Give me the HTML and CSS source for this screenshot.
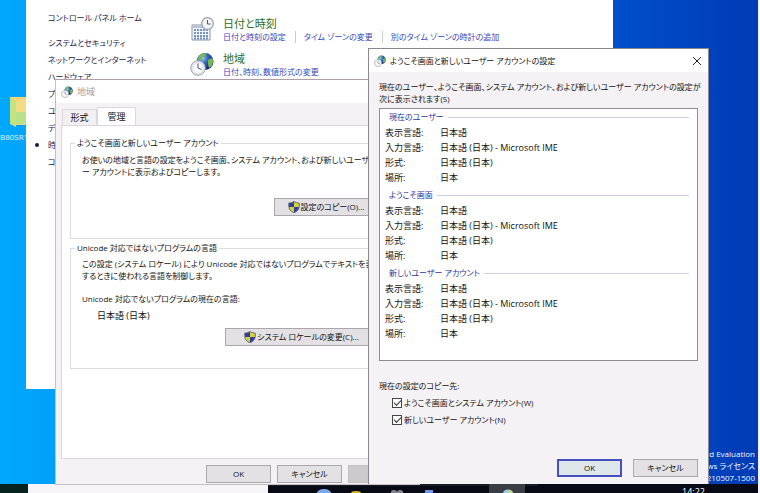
FILE: index.html
```
<!DOCTYPE html>
<html lang="ja">
<head>
  <meta charset="UTF-8">
  <meta name="viewport" content="width=device-width, initial-scale=1.0">
  <title>ようこそ画面と新しいユーザー アカウントの設定</title>
  <link rel="stylesheet" href="styles.css">
</head>
<body>
  <svg class="sprite" aria-hidden="true">
    <defs>
      <radialGradient id="globe" cx="35%" cy="30%" r="75%">
        <stop offset="0" stop-color="#9cc8f4"/>
        <stop offset=".45" stop-color="#2f62b8"/>
        <stop offset="1" stop-color="#12205e"/>
      </radialGradient>
    </defs>
    <symbol id="region" viewBox="0 0 24 24">
      <circle cx="15" cy="9.500" r="8.500" fill="url(#globe)"/>
      <path d="M9 4c2-2.500 5-3 7-2.500l-1 3-3 1-1 3-3-1zM18 8l4-2 1.300 3-1.300 5-3 2-1-4z" fill="#76b84e"/>
      <circle cx="8" cy="16" r="7.300" fill="#e9edf2" stroke="#98a3ae"/>
      <circle cx="8" cy="16" r="5.300" fill="#fafcff" stroke="#cbd2da" stroke-width=".6"/>
      <path d="M8 11.500V16l3.500 1.500" fill="none" stroke="#4b5563"/>
    </symbol>
    <symbol id="date" viewBox="0 0 24 24">
      <path d="M2 8h18v15H2z" fill="#f2f6fb" stroke="#8796aa"/>
      <path d="M2.500 8.500h17v2.500h-17z" fill="#b7c5d6"/>
      <path d="M4 13h14M4 16h14M4 19h14M4 21.500h14" stroke="#7793c0" stroke-width="1.800" stroke-dasharray="2 1"/>
      <circle cx="17.500" cy="6.500" r="5.800" fill="#f3f5f7" stroke="#98a3ae" stroke-width="1.300"/>
      <path d="M17.500 3v4h3" fill="none" stroke="#4b5563"/>
    </symbol>
    <symbol id="shield" viewBox="0 0 12 12">
      <path d="M6 .5C4.500 1.500 2.500 2 .8 2v3.500C.8 8.500 3 10.500 6 11.700 9 10.500 11.200 8.500 11.200 5.500V2C9.500 2 7.500 1.500 6 .5z" fill="#2f3f9c"/>
      <path d="M6 .5C7.500 1.500 9.500 2 11.200 2v4H6zM6 6v5.700C3 10.500 1 8.500.8 6z" fill="#d9d13a"/>
      <path d="M6 .5C4.500 1.500 2.500 2 .8 2v3.500C.8 8.500 3 10.500 6 11.700 9 10.500 11.200 8.500 11.200 5.500V2C9.500 2 7.500 1.500 6 .5z" fill="none" stroke="#55606e" stroke-width=".8"/>
    </symbol>
  </svg>

  <div class="desktop">
    <div class="folder">
      <svg viewBox="0 0 24 32"><path d="M1 1h20v28l-15 0z" fill="#f6d27a"/><path d="M1 1l6 4v26l-6-3z" fill="#c6e27c"/><path d="M7 5l14-3v25H7z" fill="#f3dc86"/><path d="M7 16h14v12H7z" fill="#b9e08b"/></svg>
      <span>B80SR1</span>
    </div>
    <div class="watermark">
      <p>Windows Server 2022 Standard Evaluation</p>
      <p>Windows ライセンス</p>
      <p>Build 20348.fe_release.210507-1500</p>
    </div>

    <div class="window control-panel">
      <nav class="side">
        <a class="home" href="#">コントロール パネル ホーム</a>
        <a href="#">システムとセキュリティ</a>
        <a href="#">ネットワークとインターネット</a>
        <a href="#">ハードウェア</a>
        <a href="#">プログラム</a>
        <a href="#">ユーザー アカウント</a>
        <a href="#">デスクトップのカスタマイズ</a>
        <a class="current" href="#">時計と地域</a>
        <a href="#">コンピューターの簡単操作</a>
      </nav>
      <div class="categories">
        <section class="category">
          <svg><use href="#date"/></svg>
          <div>
            <h2>日付と時刻</h2>
            <div class="tasks"><a href="#">日付と時刻の設定</a><a href="#">タイム ゾーンの変更</a><a href="#">別のタイム ゾーンの時計の追加</a></div>
          </div>
        </section>
        <section class="category">
          <svg><use href="#region"/></svg>
          <div>
            <h2>地域</h2>
            <div class="tasks"><a href="#">日付、時刻、数値形式の変更</a></div>
          </div>
        </section>
      </div>
    </div>

    <div class="window region">
      <header class="titlebar inactive"><svg><use href="#region"/></svg><span>地域</span></header>
      <div class="tabs">
        <button class="tab">形式</button>
        <button class="tab active">管理</button>
      </div>
      <div class="panel">
        <fieldset class="group">
          <legend>ようこそ画面と新しいユーザー アカウント</legend>
          <p>お使いの地域と言語の設定をようこそ画面、システム アカウント、および新しいユーザ<br>ー アカウントに表示およびコピーします。</p>
          <button class="btn copy"><svg><use href="#shield"/></svg>設定のコピー(O)...</button>
        </fieldset>
        <fieldset class="group">
          <legend>Unicode 対応ではないプログラムの言語</legend>
          <p>この設定 (システム ロケール) により Unicode 対応ではないプログラムでテキストを表示<br>するときに使われる言語を制御します。</p>
          <p class="label">Unicode 対応でないプログラムの現在の言語:</p>
          <p class="value">日本語 (日本)</p>
          <button class="btn locale"><svg><use href="#shield"/></svg>システム ロケールの変更(C)...</button>
        </fieldset>
      </div>
      <footer class="actions">
        <button class="btn">OK</button>
        <button class="btn">キャンセル</button>
        <button class="btn" disabled>適用(A)</button>
      </footer>
    </div>

    <div class="window accounts">
      <header class="titlebar">
        <svg><use href="#region"/></svg>
        <span>ようこそ画面と新しいユーザー アカウントの設定</span>
        <button class="close" aria-label="閉じる"><svg viewBox="0 0 10 10"><path d="M1 1l8 8M9 1L1 9" stroke="#222" fill="none"/></svg></button>
      </header>
      <div class="content">
        <p>現在のユーザー、ようこそ画面、システム アカウント、および新しいユーザー アカウントの設定が<br>次に表示されます(S)</p>
        <div class="list">
          <section>
            <h3>現在のユーザー</h3>
            <dl>
              <dt>表示言語:</dt><dd>日本語</dd>
              <dt>入力言語:</dt><dd>日本語 (日本) - Microsoft IME</dd>
              <dt>形式:</dt><dd>日本語 (日本)</dd>
              <dt>場所:</dt><dd>日本</dd>
            </dl>
          </section>
          <section>
            <h3>ようこそ画面</h3>
            <dl>
              <dt>表示言語:</dt><dd>日本語</dd>
              <dt>入力言語:</dt><dd>日本語 (日本) - Microsoft IME</dd>
              <dt>形式:</dt><dd>日本語 (日本)</dd>
              <dt>場所:</dt><dd>日本</dd>
            </dl>
          </section>
          <section>
            <h3>新しいユーザー アカウント</h3>
            <dl>
              <dt>表示言語:</dt><dd>日本語</dd>
              <dt>入力言語:</dt><dd>日本語 (日本) - Microsoft IME</dd>
              <dt>形式:</dt><dd>日本語 (日本)</dd>
              <dt>場所:</dt><dd>日本</dd>
            </dl>
          </section>
        </div>
        <p class="copy-to">現在の設定のコピー先:</p>
        <label class="check"><input type="checkbox" checked>ようこそ画面とシステム アカウント(W)</label>
        <label class="check"><input type="checkbox" checked>新しいユーザー アカウント(N)</label>
      </div>
      <footer class="actions">
        <button class="btn default">OK</button>
        <button class="btn">キャンセル</button>
      </footer>
    </div>
  </div>

  <div class="taskbar">
    <div class="start"></div>
    <div class="gap"></div>
    <div class="apps">
      <svg viewBox="0 0 270 9">
        <path d="M0 0h270v2H0z" fill="#191d22"/>
        <path d="M221 0h36v9h-36z" fill="#3a3d44"/>
        <path d="M49 9a7 4 0 0 1 14 0z" fill="#79a9e8"/>
        <path d="M83 9a5 2 0 0 1 10 0z" fill="#d8b52c"/>
        <path d="M123 9a3 2.500 0 0 1 6-1 3 2.500 0 0 1 6 1z" fill="#85858b"/>
        <path d="M157 6h8v3h-8z" fill="#6f95f0"/>
        <path d="M235 9a5 3.500 0 0 1 10 0z" fill="#9dc7ee"/>
        <path d="M240 6a5 3.500 0 0 1 5 3h-5z" fill="#b9d98a"/>
      </svg>
      <time>14:22</time>
    </div>
  </div>
</body>
</html>
```
FILE: styles.css
```
* {
  box-sizing: border-box;
}

body {
  display: flex;
  flex-direction: column;
  height: 100vh;
  margin: 0;
  overflow: hidden;
  background: #f7f4f8;
  color: #111;
  font-family: "Open Sans", "Noto Sans CJK JP", sans-serif;
  font-size: 8px;
  line-height: 12px;
  font-feature-settings: "palt";
  white-space: nowrap;
}

h2, h3, p, dl, dd {
  margin: 0;
  font-weight: normal;
}

a {
  text-decoration: none;
}

button {
  padding: 0;
  color: inherit;
  font: inherit;
  font-feature-settings: inherit;
}

.sprite {
  position: absolute;
  width: 0;
  height: 0;
}

.desktop {
  position: relative;
  flex: 1;
  margin-right: 2px;
  background: linear-gradient(90deg, #00a8fc 0%, #009ff8 8%, #004ecb 82%, #003bb5 100%);
}

.folder {
  position: absolute;
  left: 0;
  top: 96px;
  color: #e4f5ff;
}

.folder svg {
  display: block;
  width: 24px;
  height: 32px;
  margin: 0 0 3px 9px;
}

.watermark {
  position: absolute;
  right: 3px;
  bottom: 0;
  color: #f4f7ff;
  text-align: right;
}

.window {
  position: absolute;
  background: #f5f2f6;
}

/* control panel */
.control-panel {
  display: flex;
  left: 26px;
  top: 0;
  width: 587px;
  height: 389px;
  padding: 9px 0 0 22px;
  background: #fff;
}

.side {
  width: 142px;
}

.side a {
  display: block;
  color: #22224c;
  line-height: 17px;
}

.side .home {
  margin-bottom: 8px;
}

.side .current::before {
  content: "";
  float: left;
  width: 4px;
  height: 4px;
  margin: 7px 0 0 -13px;
  border-radius: 50%;
  background: #1b1b40;
}

.category {
  display: flex;
  gap: 9px;
  height: 35px;
  padding-top: 8px;
}

.category svg {
  width: 24px;
  height: 24px;
}

.category h2 {
  color: #2c6b1c;
  font-size: 11px;
  line-height: 14px;
}

.tasks {
  display: flex;
}

.tasks a {
  color: #3447bd;
}

.tasks a + a {
  margin-left: 9px;
  padding-left: 8px;
  border-left: 1px solid #ccc;
}

/* title bars */
.titlebar {
  display: flex;
  align-items: center;
  gap: 4px;
  height: 23px;
  padding: 0 6px 0 5px;
  background: #fff;
}

.titlebar svg {
  width: 12px;
  height: 12px;
}

.inactive {
  color: #a79a9c;
  font-size: 9px;
}

.close {
  display: flex;
  margin-left: auto;
  border: 0;
  background: none;
}

.close svg {
  width: 10px;
  height: 10px;
}

/* buttons */
.btn {
  display: flex;
  align-items: center;
  justify-content: center;
  width: 65px;
  height: 18px;
  border: 1px solid #aaa6ab;
  background: #e4e1e5;
}

.btn svg {
  width: 12px;
  height: 12px;
  margin-right: 1px;
}

.btn:disabled {
  border-color: #c4c1c5;
  background: #cdcace;
  color: #88858a;
}

.default {
  border: 2px solid #4450bd;
  background: #dfe7ea;
}

.actions {
  display: flex;
  justify-content: flex-end;
}

/* region dialog */
.region {
  left: 55px;
  top: 79px;
  width: 365px;
  border: 1px solid #c6bfc8;
  border-top-color: #ad9da8;
}

.tabs {
  display: flex;
  align-items: flex-end;
  height: 22px;
  padding-left: 6px;
}

.tab {
  width: 35px;
  height: 16px;
  border: 1px solid #dcd8dd;
  border-bottom: 0;
  background: #f3f0f4;
  font-size: 9px;
}

.tab.active {
  width: 39px;
  height: 18px;
  background: #fff;
}

.panel {
  height: 334px;
  margin: 0 5px;
  padding: 11px 8px;
  border: 1px solid #dcd8dd;
  background: #fff;
}

.group {
  height: 102px;
  margin: 0 0 3px;
  padding: 5px 0 0 11px;
  border: 1px solid #dcdcdf;
}

.group + .group {
  height: 127px;
  padding-top: 4px;
}

.group legend {
  margin-left: -7px;
  padding: 0 2px;
}

.label {
  margin-top: 11px;
}

.value {
  margin: 5px 0 0 15px;
  font-size: 9px;
}

.copy {
  width: 104px;
  margin: 20px 0 0 192px;
}

.locale {
  width: 153px;
  margin: 6px 0 0 143px;
}

.region .actions {
  gap: 6px;
  padding: 6px 6px 1px;
}

/* welcome screen and new user accounts dialog */
.accounts {
  display: flex;
  flex-direction: column;
  left: 368px;
  top: 48px;
  bottom: 0;
  width: 341px;
  border: 1px solid #8b8790;
  border-bottom: 0;
}

.content {
  flex: 1;
  padding: 9px 10px 0;
}

.list {
  display: flex;
  flex-direction: column;
  gap: 2px;
  height: 253px;
  margin: 3px 0 19px;
  border: 1px solid #8f8d94;
  background: #fff;
}

.list h3 {
  display: flex;
  align-items: center;
  gap: 4px;
  margin: 0 8px 0 9px;
  color: #2d339a;
  font-size: 8px;
  line-height: 16px;
}

.list h3::after {
  content: "";
  flex: 1;
  height: 1px;
  background: #cfd0e8;
}

.list dl {
  display: grid;
  grid-template-columns: 55px 1fr;
  padding-left: 5px;
  font-size: 9px;
  line-height: 15px;
}

.check {
  display: flex;
  align-items: center;
  gap: 2px;
  height: 17px;
  margin-left: 13px;
}

.copy-to {
  margin-bottom: 2px;
}

.check input {
  appearance: none;
  width: 10px;
  height: 10px;
  margin: 0;
  border: 1px solid #444;
  background: #fff;
}

.check input:checked::before {
  content: "";
  display: block;
  width: 6px;
  height: 3px;
  margin: 1px;
  border-left: 1px solid #333;
  border-bottom: 1px solid #333;
  transform: rotate(-45deg);
}

.accounts .actions {
  gap: 11px;
  padding: 0 10px 7px;
}

/* taskbar */
.taskbar {
  display: flex;
  height: 9px;
  margin-right: 2px;
}

.start {
  width: 28px;
  background: #06231f;
}

.gap {
  width: 240px;
}

.apps {
  display: flex;
  flex: 1;
  justify-content: space-between;
  overflow: hidden;
  padding-right: 53px;
  background: #070a14;
}

.apps svg {
  width: 270px;
  height: 9px;
}

.apps time {
  color: #fff;
  font-size: 9px;
  line-height: 16px;
}
```
